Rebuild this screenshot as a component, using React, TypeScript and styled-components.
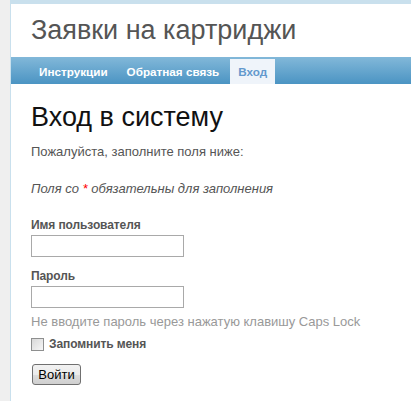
import React from "react";
import styled, { createGlobalStyle } from "styled-components";

const GlobalStyle = createGlobalStyle`
  html, body { margin: 0; padding: 0; }
  body {
    background: #efefef;
    font-family: "Liberation Sans", Arial, Helvetica, sans-serif;
    font-size: 13px;
    color: #555;
  }
`;

const Page = styled.div`
  margin-left: 10px;
  border-left: 1px solid #c9e0ed;
  background: #fff;
  min-height: 401px;
`;

const Header = styled.div`
  border-top: 4px solid #c9e0ed;
`;

const Logo = styled.div`
  padding: 10px 20px;
  font-size: 27px;
  line-height: 33px;
  color: #555;
`;

const Menu = styled.ul`
  display: flex;
  gap: 3px;
  height: 27px;
  box-sizing: border-box;
  margin: 0;
  padding: 2px 20px 0 20px;
  list-style: none;
  background: linear-gradient(#82b8d9, #4b94c3);
`;

const MenuItem = styled.li<{ $active?: boolean }>`
  height: 25px;
  line-height: 25px;
  padding: 0 8px;
  font-size: 11.7px;
  font-weight: bold;
  color: ${(p) => (p.$active ? "#6399cd" : "#fff")};
  background: ${(p) => (p.$active ? "#eff4fa" : "transparent")};
`;

const Content = styled.div`
  padding: 20px;
`;

const Title = styled.h1`
  margin: 0 0 11px;
  font-size: 27px;
  line-height: 27px;
  font-weight: normal;
  color: #111;
`;

const Text = styled.p<{ $italic?: boolean }>`
  margin: 0 0 17px;
  line-height: 20px;
  font-style: ${(p) => (p.$italic ? "italic" : "normal")};
`;

const Required = styled.span`
  color: red;
`;

const Form = styled.form`
  display: flex;
  flex-direction: column;
  margin-top: 15px;
`;

const Row = styled.div<{ $last?: boolean }>`
  display: flex;
  flex-direction: column;
  align-items: flex-start;
  margin-bottom: ${(p) => (p.$last ? "0" : "10px")};
`;

const Label = styled.label`
  font-size: 12px;
  letter-spacing: -0.1px;
  font-weight: bold;
  line-height: 18px;
  margin-bottom: 1px;
  color: #555;
`;

const Input = styled.input`
  box-sizing: border-box;
  width: 153px;
  height: 22px;
  margin: 0;
  border: 1px solid #a9a9a9;
  background: #fff;
  font-family: inherit;
  font-size: 13px;
`;

const Hint = styled.p`
  margin: 4px 0 0;
  line-height: 20px;
  color: #999;
`;

const CheckRow = styled.div`
  display: flex;
  align-items: center;
  gap: 5px;
  margin-top: 3px;
`;

const Check = styled.input`
  appearance: none;
  box-sizing: border-box;
  width: 13px;
  height: 13px;
  margin: 0;
  border: 1px solid #8e8f8f;
  background: linear-gradient(135deg, #d8d8d8, #f6f6f6);
`;

const CheckLabel = styled.label`
  font-size: 12px;
  letter-spacing: -0.1px;
  font-weight: bold;
  line-height: 18px;
  color: #555;
`;

const Button = styled.button`
  align-self: flex-start;
  box-sizing: border-box;
  width: 49px;
  height: 21px;
  margin-top: 11px;
  margin-left: 1px;
  padding: 0;
  border: 1px solid #707070;
  border-radius: 3px;
  background: linear-gradient(#f2f2f2 0%, #ebebeb 50%, #dddddd 51%, #cfcfcf 100%);
  font-family: inherit;
  font-size: 13px;
  color: #000;
`;

export default function App() {
  return (
    <>
      <GlobalStyle />
      <Page>
        <Header>
          <Logo>Заявки на картриджи</Logo>
        </Header>
        <Menu>
          <MenuItem>Инструкции</MenuItem>
          <MenuItem>Обратная связь</MenuItem>
          <MenuItem $active>Вход</MenuItem>
        </Menu>
        <Content>
          <Title>Вход в систему</Title>
          <Text>Пожалуйста, заполните поля ниже:</Text>
          <Text $italic>
            Поля со <Required>*</Required> обязательны для заполнения
          </Text>
          <Form onSubmit={(e) => e.preventDefault()}>
            <Row>
              <Label htmlFor="username">Имя пользователя</Label>
              <Input id="username" type="text" />
            </Row>
            <Row $last>
              <Label htmlFor="password">Пароль</Label>
              <Input id="password" type="password" />
              <Hint>Не вводите пароль через нажатую клавишу Caps Lock</Hint>
            </Row>
            <CheckRow>
              <Check id="remember" type="checkbox" />
              <CheckLabel htmlFor="remember">Запомнить меня</CheckLabel>
            </CheckRow>
            <Button type="submit">Войти</Button>
          </Form>
        </Content>
      </Page>
    </>
  );
}
